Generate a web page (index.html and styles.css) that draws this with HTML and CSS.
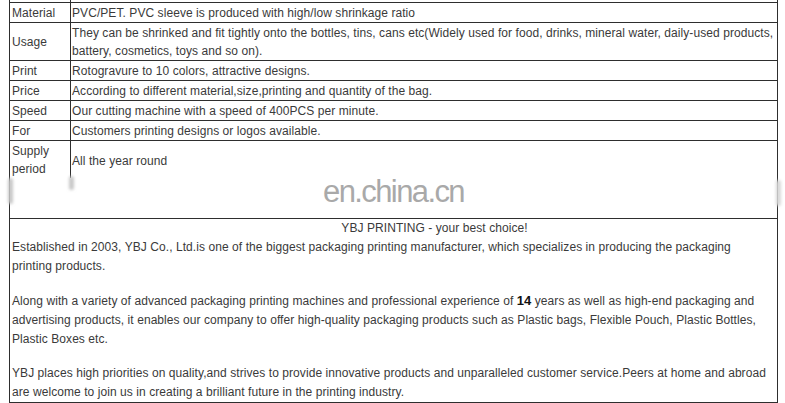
FILE: index.html
```html
<!DOCTYPE html>
<html>
<head>
<meta charset="utf-8">
<link rel="stylesheet" href="styles.css">
</head>
<body>
<div class="sheet">
  <div class="spec">
    <div class="row row-cut"><div class="label"></div><div class="value"></div></div>
    <div class="row"><div class="label">Material</div><div class="value">PVC/PET. PVC sleeve is produced with high/low shrinkage ratio</div></div>
    <div class="row"><div class="label">Usage</div><div class="value">They can be shrinked and fit tightly onto the bottles, tins, cans etc(Widely used for food, drinks, mineral water, daily-used products,<br>battery, cosmetics, toys and so on).</div></div>
    <div class="row"><div class="label">Print</div><div class="value">Rotogravure to 10 colors, attractive designs.</div></div>
    <div class="row"><div class="label">Price</div><div class="value">According to different material,size,printing and quantity of the bag.</div></div>
    <div class="row"><div class="label">Speed</div><div class="value">Our cutting machine with a speed of 400PCS per minute.</div></div>
    <div class="row"><div class="label">For</div><div class="value">Customers printing designs or logos available.</div></div>
    <div class="row row-last"><div class="label">Supply<br>period</div><div class="value">All the year round</div></div>
  </div>
  <div class="gap">
    <span class="watermark">en.china.cn</span>
    <span class="smudge smudge-l"></span>
    <span class="smudge smudge-m"></span>
    <span class="smudge smudge-r"></span>
  </div>
  <div class="about">
    <div class="title">YBJ PRINTING - your best choice!</div>
    <p>Established in 2003, YBJ Co., Ltd.is one of the biggest packaging printing manufacturer, which specializes in producing the packaging<br>printing products.</p>
    <p>Along with a variety of advanced packaging printing machines and professional experience of <b>14</b> years as well as high-end packaging and<br>advertising products, it enables our company to offer high-quality packaging products such as Plastic bags, Flexible Pouch, Plastic Bottles,<br>Plastic Boxes etc.</p>
    <p>YBJ places high priorities on quality,and strives to provide innovative products and unparalleled customer service.Peers at home and abroad<br>are welcome to join us in creating a brilliant future in the printing industry.</p>
  </div>
</div>
<div class="shade"></div>
</body>
</html>
```

FILE: styles.css
```css
html, body {
  margin: 0;
  padding: 0;
  background: #ffffff;
}

body {
  font-family: "Liberation Sans", Arial, sans-serif;
  font-size: 12px;
  letter-spacing: 0.07px;
  color: #3a3a3a;
}

.sheet {
  position: relative;
  margin-left: 9px;
  width: 767px;
  border-left: 1px solid #2e2e2e;
  border-right: 1px solid #2e2e2e;
}

.row {
  display: grid;
  grid-template-columns: 60px 1fr;
  border-bottom: 1px solid #2e2e2e;
  line-height: 18px;
}

.label {
  padding: 1px 0 0 2px;
  display: flex;
  align-items: center;
}

.value {
  border-left: 1px solid #2e2e2e;
  padding: 1px 0 0 1px;
  display: flex;
  align-items: center;
  white-space: nowrap;
}

.row-cut .label,
.row-cut .value {
  height: 2px;
  padding: 0;
}

.row-last {
  border-bottom: none;
}

.row-last .value {
  padding-top: 3px;
}

.gap {
  height: 40px;
  border-bottom: 1px solid #2e2e2e;
  display: flex;
  justify-content: center;
}

.watermark {
  margin: -6px 0 0 0;
  font-size: 31px;
  letter-spacing: -1.6px;
  line-height: 40px;
  color: #a9a9a9;
  font-weight: 300;
}

.smudge {
  position: absolute;
  width: 5px;
  background: #c8c8c8;
  border-radius: 3px;
  filter: blur(1.5px);
}

.smudge-l { left: -2px; top: 178px; height: 26px; }
.smudge-m { left: 59px; top: 176px; height: 14px; }
.smudge-r { right: -4px; top: 180px; height: 26px; background: #d8d8d8; }

.about {
  border-bottom: 2px solid #2e2e2e;
  padding: 0 0 0 2px;
  line-height: 19px;
}

.title {
  line-height: 18px;
  text-align: center;
  padding: 0 0 1px 80px;
}

.about p {
  margin: 0 0 15px;
  white-space: nowrap;
}

.about p:last-child {
  margin-bottom: 0;
}

.about b {
  font-size: 13px;
  color: #111;
}

.shade {
  margin-left: 10px;
  width: 748px;
  height: 3px;
  background: #e2e2e2;
}
```
